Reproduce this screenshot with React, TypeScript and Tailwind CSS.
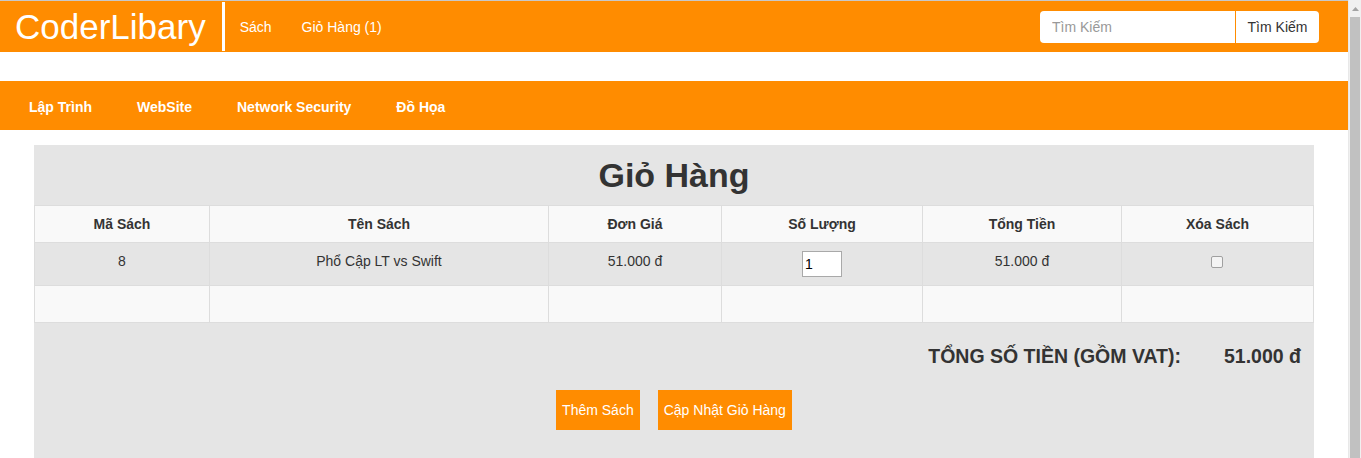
const MENU = ['Lập Trình', 'WebSite', 'Network Security', 'Đồ Họa']
const COLS = [
  { title: 'Mã Sách', w: 'w-[175px]' },
  { title: 'Tên Sách', w: 'w-[339px]' },
  { title: 'Đơn Giá', w: 'w-[173px]' },
  { title: 'Số Lượng', w: 'w-[201px]' },
  { title: 'Tổng Tiền', w: 'w-[199px]' },
  { title: 'Xóa Sách', w: '' },
]

export default function App() {
  return (
    <div className="flex w-full h-[458px] overflow-hidden bg-white text-[#333] font-['Liberation_Sans',Arial,sans-serif] text-sm">
      <div className="flex-1 min-w-0 border-t border-[#c8c8c8]">
        {/* top bar */}
        <div className="h-[51px] bg-[#ff8c00] flex items-center">
          <div className="pl-[15px] pr-[16px] text-white text-[35px] leading-none">CoderLibary</div>
          <div className="w-[3px] h-[49px] bg-white" />
          <nav className="flex">
            <a className="px-[15px] text-white">Sách</a>
            <a className="px-[15px] text-white">Giỏ Hàng (1)</a>
          </nav>
          <div className="ml-auto mr-[29px] flex h-[32px]">
            <input
              placeholder="Tìm Kiếm"
              className="w-[195px] h-full rounded-l bg-white px-3 text-sm text-[#555] placeholder:text-[#999] outline-none"
            />
            <button className="w-[84px] h-full rounded-r bg-white border-l border-[#ff8c00] text-[#333] text-sm">
              Tìm Kiếm
            </button>
          </div>
        </div>

        {/* category bar */}
        <div className="mt-[29px] h-[49px] bg-[#ff8c00] flex items-center pl-[29px] pt-[2px] gap-[45px]">
          {MENU.map(m => (
            <a key={m} className="text-white font-bold">{m}</a>
          ))}
        </div>

        {/* cart */}
        <div className="w-[1280px] mx-auto mt-[15px] bg-[#e5e5e5] pb-10">
          <h1 className="h-[60px] flex items-center justify-center text-[34px] font-bold text-[#333]">Giỏ Hàng</h1>
          <table className="w-full border-collapse text-center leading-5">
            <thead>
              <tr className="bg-[#f9f9f9]">
                {COLS.map(c => (
                  <th key={c.title} className={`${c.w} border border-[#ddd] p-2 font-bold`}>{c.title}</th>
                ))}
              </tr>
            </thead>
            <tbody>
              <tr className="bg-[#e5e5e5]">
                <td className="border border-[#ddd] p-2 align-top">8</td>
                <td className="border border-[#ddd] p-2 align-top">Phổ Cập LT vs Swift</td>
                <td className="border border-[#ddd] p-2 align-top">51.000 đ</td>
                <td className="border border-[#ddd] p-2 align-top">
                  <input
                    defaultValue="1"
                    className="w-10 h-[26px] border border-[#a9a9a9] bg-white px-[2px] text-sm text-black align-top"
                  />
                </td>
                <td className="border border-[#ddd] p-2 align-top">51.000 đ</td>
                <td className="border border-[#ddd] p-2 align-top">
                  <input
                    type="checkbox"
                    className="appearance-none w-[12px] h-[12px] mt-[5px] -ml-[2px] border border-[#a0a0a0] rounded-[2px] bg-[#f4f4f4] align-top"
                  />
                </td>
              </tr>
              <tr className="bg-[#f9f9f9]">
                {COLS.map(c => (
                  <td key={c.title} className="border border-[#ddd] p-2 h-[37px]" />
                ))}
              </tr>
            </tbody>
          </table>
          <div className="flex justify-end items-center gap-[43px] pr-[13px] mt-[20px] text-[19.5px] font-bold text-[#333]">
            <span>TỔNG SỐ TIỀN (GỒM VAT):</span>
            <span>51.000 đ</span>
          </div>
          <div className="flex justify-center gap-[18px] mt-[19px]">
            <button className="h-10 px-[6px] bg-[#ff8c00] text-white text-sm">Thêm Sách</button>
            <button className="h-10 px-[6px] bg-[#ff8c00] text-white text-sm">Cập Nhật Giỏ Hàng</button>
          </div>
        </div>
      </div>

      {/* browser scrollbar */}
      <div className="w-[13px] shrink-0 flex flex-col bg-[#f0f0f0] border-l border-[#e8e8e8]">
        <div className="h-[17px] flex items-center justify-center">
          <svg width="7" height="4" viewBox="0 0 7 4"><path d="M0 4 L3.5 0 L7 4 Z" fill="#a3a3a3" /></svg>
        </div>
        <div className="flex-1 mx-[1px] bg-[#c1c1c1]" />
      </div>
    </div>
  )
}
